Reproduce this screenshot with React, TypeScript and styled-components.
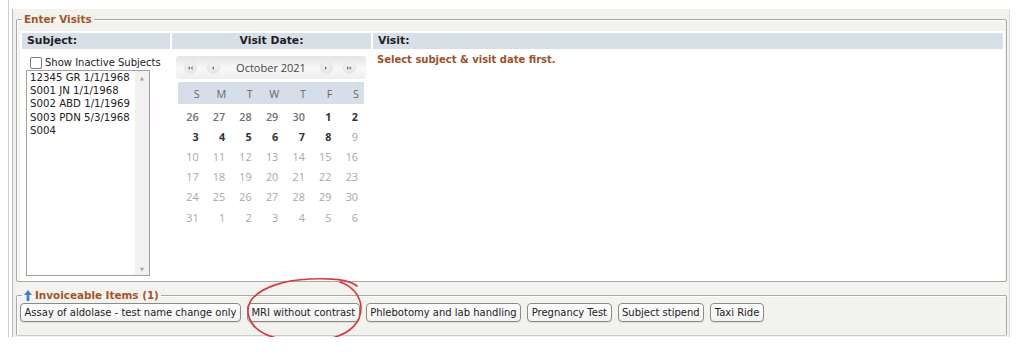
import React, { type FC } from "react";
import styled, { createGlobalStyle } from "styled-components";

const GlobalStyle = createGlobalStyle`
  html, body {
    margin: 0;
    padding: 0;
    background: #ffffff;
  }
  body {
    font-family: "DejaVu Sans", Verdana, sans-serif;
    font-size: 10px;
    color: #222;
  }
`;

type Day = { n: number; kind: "prev" | "past" | "future" };

const buildDays = (): Day[] => {
  const days: Day[] = [];
  [26, 27, 28, 29, 30].forEach((n) => days.push({ n, kind: "prev" }));
  for (let i = 1; i <= 31; i++) {
    days.push({ n: i, kind: i <= 8 ? "past" : "future" });
  }
  for (let i = 1; i <= 6; i++) days.push({ n: i, kind: "future" });
  return days;
};

const subjects = [
  "12345 GR 1/1/1968",
  "S001 JN 1/1/1968",
  "S002 ABD 1/1/1969",
  "S003 PDN 5/3/1968",
  "S004",
];

const items = [
  "Assay of aldolase - test name change only",
  "MRI without contrast",
  "Phlebotomy and lab handling",
  "Pregnancy Test",
  "Subject stipend",
  "Taxi Ride",
];

const NavIcon: FC<{ dir: "left" | "right"; double?: boolean }> = ({
  dir,
  double,
}) => {
  const tri = (x: number) =>
    dir === "left"
      ? `M${x + 2} 0 L${x} 2 L${x + 2} 4 Z`
      : `M${x} 0 L${x + 2} 2 L${x} 4 Z`;
  return (
    <svg width={double ? 5 : 3} height="4" viewBox={`0 0 ${double ? 5 : 3} 4`}>
      <path d={tri(0)} fill="#7a7a7a" />
      {double && <path d={tri(2.6)} fill="#7a7a7a" />}
    </svg>
  );
};

const UpArrow: FC = () => (
  <svg width="8" height="11" viewBox="0 0 8 11">
    <path d="M4 0 L8 5 L5.4 5 L5.4 11 L2.6 11 L2.6 5 L0 5 Z" fill="#3c7fd6" />
  </svg>
);

const Scribble: FC = () => (
  <Circle width="124" height="70" viewBox="0 0 124 70">
    <path
      d="M117 10 C108 3, 92 2, 70 3 C45 4, 22 11, 12 23 C4 34, 8 50, 25 58 C42 66, 68 67, 92 62 C111 57, 121 46, 121 32 C121 20, 112 10, 100 6"
      fill="none"
      stroke="#d8393a"
      strokeWidth="1.6"
      strokeLinecap="round"
    />
  </Circle>
);

export default function App() {
  const days = buildDays();
  return (
    <>
      <GlobalStyle />
      <Page>
        <Panel>
          <Fieldset>
            <Legend>Enter Visits</Legend>
            <VisitTable>
              <HeadCell>Subject:</HeadCell>
              <HeadCell center>Visit Date:</HeadCell>
              <HeadCell>Visit:</HeadCell>

              <BodyCell>
                <CheckRow>
                  <CheckBox />
                  <span>Show Inactive Subjects</span>
                </CheckRow>
                <ListBox>
                  <ListItems>
                    {subjects.map((s) => (
                      <ListItem key={s}>{s}</ListItem>
                    ))}
                  </ListItems>
                  <ScrollTrack>
                    <ScrollArrow>▲</ScrollArrow>
                    <ScrollArrow>▼</ScrollArrow>
                  </ScrollTrack>
                </ListBox>
              </BodyCell>

              <BodyCell>
                <Calendar>
                  <CalTitle>
                    <NavGroup>
                      <NavButton>
                        <NavIcon dir="left" double />
                      </NavButton>
                      <NavButton>
                        <NavIcon dir="left" />
                      </NavButton>
                    </NavGroup>
                    <MonthLabel>October 2021</MonthLabel>
                    <NavGroup>
                      <NavButton>
                        <NavIcon dir="right" />
                      </NavButton>
                      <NavButton>
                        <NavIcon dir="right" double />
                      </NavButton>
                    </NavGroup>
                  </CalTitle>
                  <WeekHead>
                    {["S", "M", "T", "W", "T", "F", "S"].map((d, i) => (
                      <WeekDay key={i}>{d}</WeekDay>
                    ))}
                  </WeekHead>
                  <DayGrid>
                    {days.map((d, i) => (
                      <DayCell key={i} kind={d.kind}>
                        {d.n}
                      </DayCell>
                    ))}
                  </DayGrid>
                </Calendar>
              </BodyCell>

              <BodyCell>
                <Notice>Select subject &amp; visit date first.</Notice>
              </BodyCell>
            </VisitTable>
          </Fieldset>

          <ItemsFieldset>
            <ItemsLegend>
              <UpArrow />
              <span>Invoiceable Items (1)</span>
            </ItemsLegend>
            <ButtonRow>
              {items.map((label) =>
                label === "MRI without contrast" ? (
                  <Annotated key={label}>
                    <ItemButton>{label}</ItemButton>
                    <Scribble />
                  </Annotated>
                ) : (
                  <ItemButton key={label}>{label}</ItemButton>
                )
              )}
            </ButtonRow>
          </ItemsFieldset>
        </Panel>
      </Page>
    </>
  );
}

const Page = styled.div`
  margin-left: 8px;
  padding-top: 9px;
  padding-left: 3px;
  width: 998px;
  border-left: 1px solid #cfcfcf;
`;

const Panel = styled.div`
  background: #f2f2ee;
  border-left: 1px solid #b9b9b9;
  border-right: 1px solid #d8d8d8;
  padding: 4px 2px 1px 3px;
`;

const Fieldset = styled.fieldset`
  margin: 0;
  padding: 5px 1px 0 3px;
  border: 1px solid #a9a9a9;
  border-radius: 2px;
  box-shadow: inset 1px 1px 0 #ffffff;
  min-width: 0;
`;

const Legend = styled.legend`
  margin-left: 2px;
  padding: 0 2px;
  font-weight: bold;
  font-size: 10.4px;
  line-height: 13px;
  color: #a5532a;
`;

const VisitTable = styled.div`
  display: grid;
  grid-template-columns: 148px 199px 1fr;
  grid-template-rows: 16px 228px;
  gap: 2px;
  padding: 2px;
  background: #ffffff;
`;

const HeadCell = styled.div<{ center?: boolean }>`
  background: #d7dfe9;
  font-weight: bold;
  font-size: 10.8px;
  line-height: 16px;
  padding-left: ${({ center }) => (center ? "0" : "5px")};
  text-align: ${({ center }) => (center ? "center" : "left")};
  color: #1e1e1e;
`;

const BodyCell = styled.div`
  padding: 5px 4px 0 4px;
  display: flex;
  flex-direction: column;
  align-items: flex-start;
  min-width: 0;
`;

const CheckRow = styled.label`
  display: flex;
  align-items: center;
  gap: 3px;
  height: 12px;
  line-height: 12px;
  color: #222;
  margin-left: 4px;
  margin-top: 1px;
`;

const CheckBox = styled.span`
  display: block;
  width: 10px;
  height: 10px;
  border: 1px solid #7a7a7a;
  border-radius: 2px;
  background: #fff;
`;

const ListBox = styled.div`
  margin-top: 1px;
  width: 124px;
  height: 206px;
  box-sizing: border-box;
  border: 1px solid #a0a0a0;
  display: flex;
  background: #fff;
`;

const ListItems = styled.div`
  flex: 1;
  padding: 0 0 0 3px;
  font-size: 10.2px;
  line-height: 13.2px;
  white-space: nowrap;
  overflow: hidden;
`;

const ListItem = styled.div`
  color: #222;
`;

const ScrollTrack = styled.div`
  width: 14px;
  background: #f1f1f1;
  display: flex;
  flex-direction: column;
  justify-content: space-between;
  align-items: center;
  padding: 4px 0 3px;
`;

const ScrollArrow = styled.span`
  font-size: 5px;
  line-height: 6px;
  color: #a3a3a3;
`;

const Calendar = styled.div`
  width: 190px;
  font-family: "Open Sans", "DejaVu Sans", sans-serif;
`;

const CalTitle = styled.div`
  height: 23px;
  border-radius: 3px;
  background: linear-gradient(to bottom, #e4e4e4 0%, #f8f8f8 55%, #eeeeee 100%);
  display: flex;
  align-items: center;
  justify-content: space-between;
  padding: 0 10px 0 8px;
  box-sizing: border-box;
`;

const NavGroup = styled.div`
  display: flex;
  gap: 10px;
`;

const NavButton = styled.span`
  width: 13px;
  height: 13px;
  border-radius: 50%;
  background: radial-gradient(circle at 50% 40%, #f4f4f4 0%, #dedede 100%);
  display: flex;
  align-items: center;
  justify-content: center;
`;

const MonthLabel = styled.span`
  font-size: 11px;
  color: #444;
  margin-left: 2px;
`;

const WeekHead = styled.div`
  margin: 3px 2px 0;
  height: 22px;
  background: #d6dfe9;
  display: grid;
  grid-template-columns: repeat(7, 1fr);
  align-items: center;
`;

const WeekDay = styled.span`
  text-align: right;
  padding-right: 5px;
  font-size: 10.8px;
  color: #666;
`;

const DayGrid = styled.div`
  margin: 2px 2px 0;
  display: grid;
  grid-template-columns: repeat(7, 1fr);
  grid-auto-rows: 20.2px;
  align-items: center;
`;

const DayCell = styled.span<{ kind: "prev" | "past" | "future" }>`
  text-align: right;
  padding-right: 6px;
  font-size: 10.8px;
  font-weight: ${({ kind }) =>
    kind === "past" ? 700 : kind === "prev" ? 600 : 400};
  color: ${({ kind }) =>
    kind === "past" ? "#333" : kind === "prev" ? "#707070" : "#a8a8a8"};
`;

const Notice = styled.div`
  font-weight: bold;
  color: #a0502a;
  line-height: 13px;
  margin-top: -3px;
`;

const ItemsFieldset = styled(Fieldset)`
  margin-top: 7px;
  padding: 1px 2px 13px 3px;
  border-bottom-color: #c6ccd6;
`;

const ItemsLegend = styled(Legend)`
  display: flex;
  align-items: center;
  gap: 3px;
`;

const ButtonRow = styled.div`
  display: flex;
  gap: 6px;
`;

const ItemButton = styled.button`
  height: 19px;
  padding: 0 3.5px;
  border: 1px solid #8a8a8a;
  border-radius: 4px;
  background: linear-gradient(to bottom, #ffffff, #f2f2f2);
  font-family: "DejaVu Sans", Verdana, sans-serif;
  font-size: 10px;
  color: #222;
  white-space: nowrap;
  box-shadow: 0 1px 0 #ddd;
`;

const Annotated = styled.span`
  position: relative;
  display: inline-flex;
`;

const Circle = styled.svg`
  position: absolute;
  left: -7px;
  top: -27px;
  pointer-events: none;
`;
